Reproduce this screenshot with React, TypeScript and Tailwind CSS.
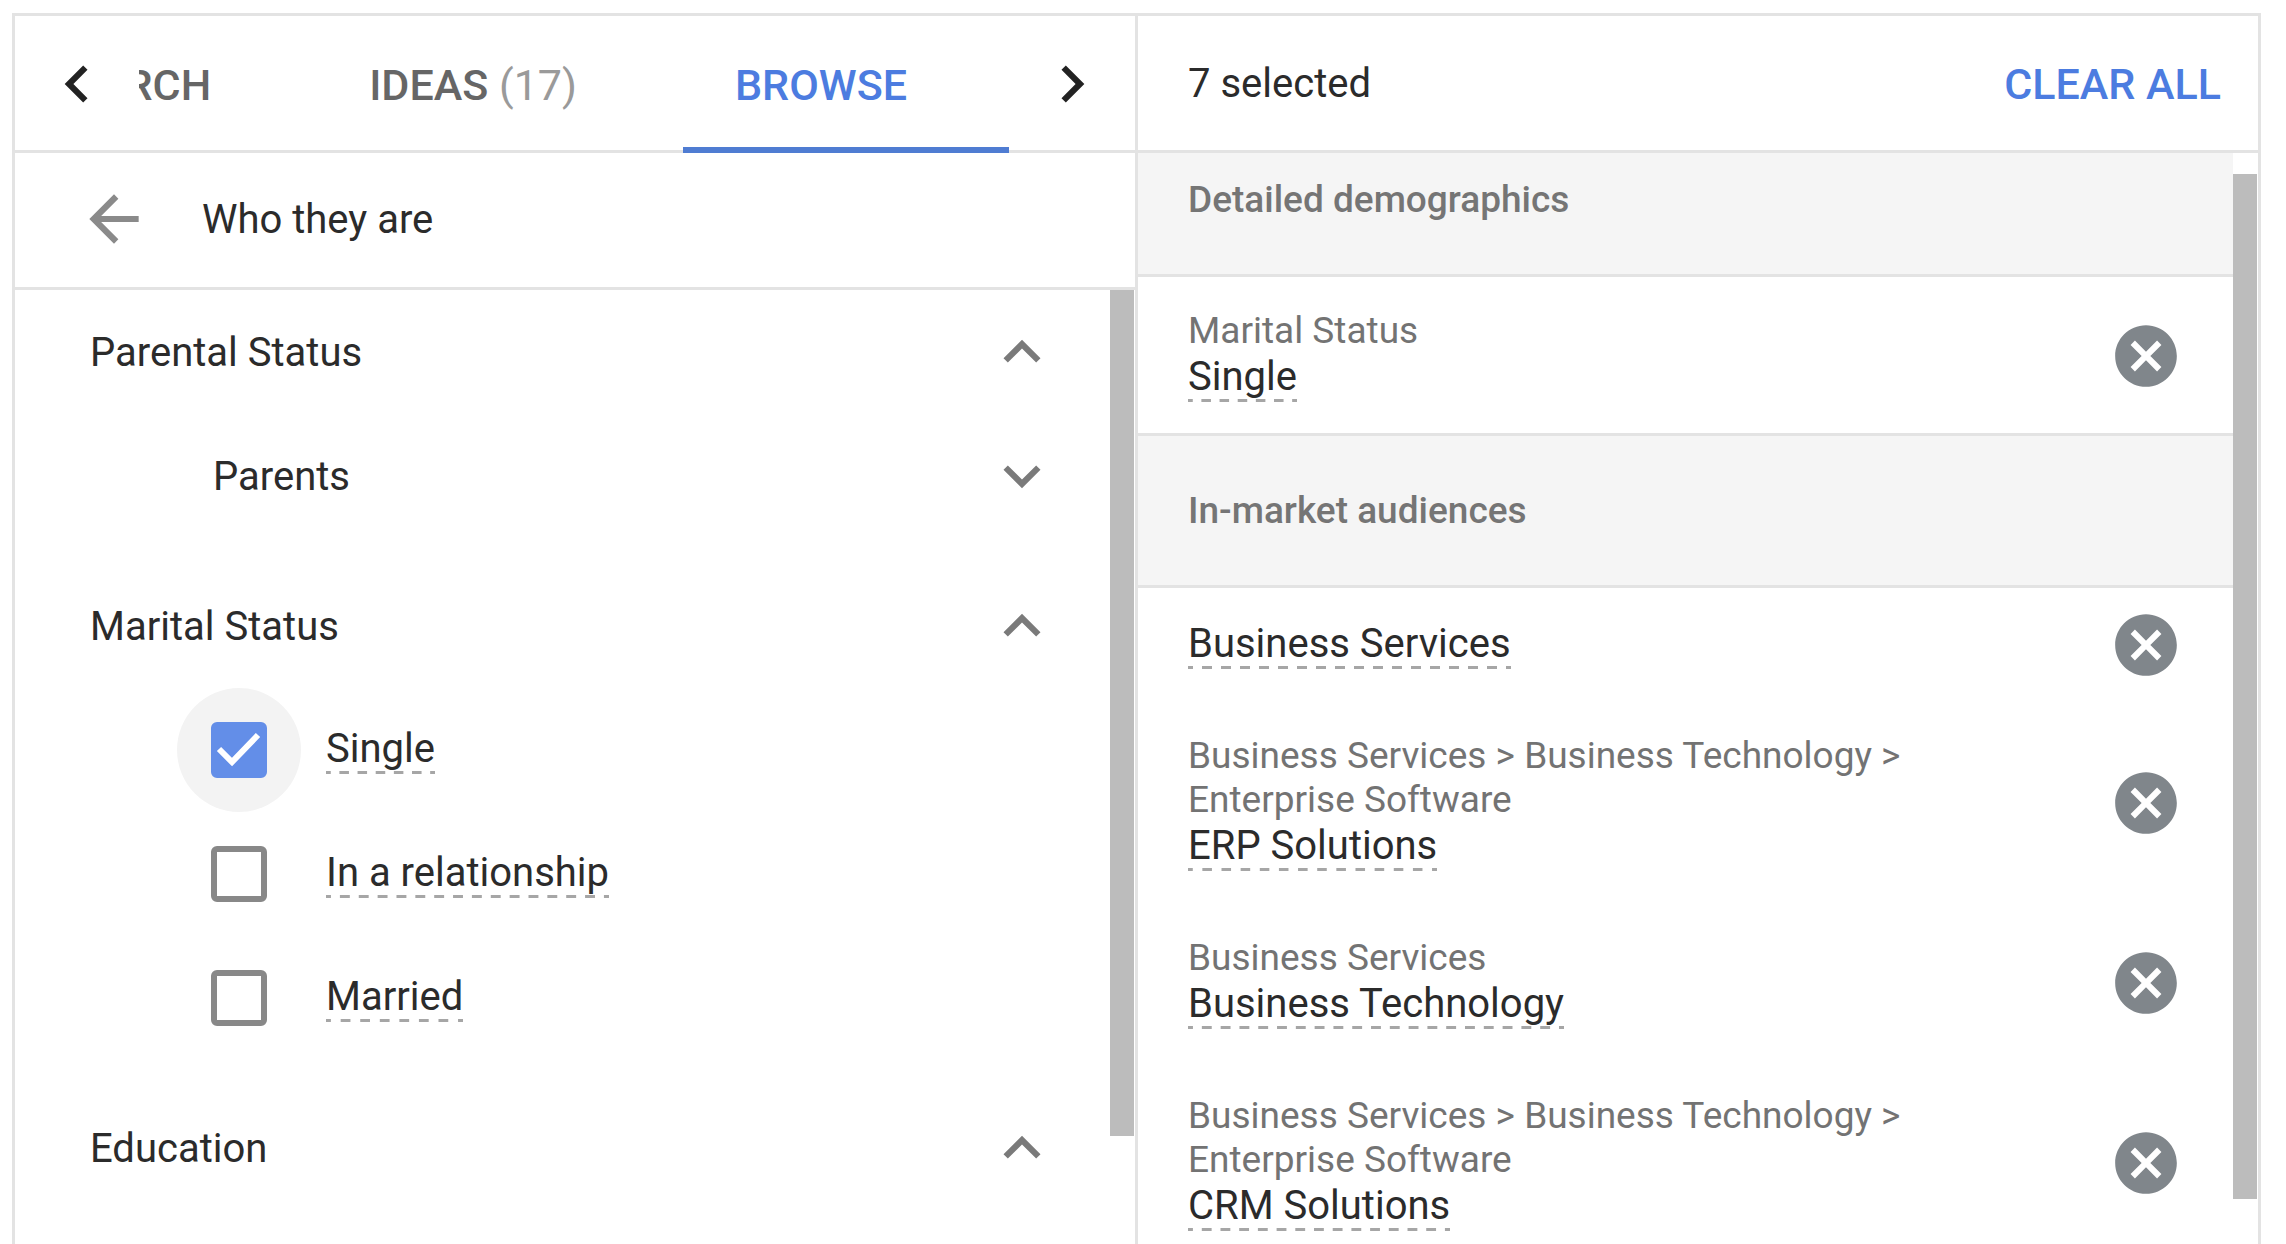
import { useState } from "react";

const PATHS = {
  up: "M12 8l-6 6 1.41 1.41L12 10.83l4.59 4.58L18 14z",
  down: "M16.59 8.59L12 13.17 7.41 8.59 6 10l6 6 6-6z",
  left: "M15.41 7.41L14 6l-6 6 6 6 1.41-1.41L10.83 12z",
  right: "M10 6L8.59 7.41 13.17 12l-4.58 4.59L10 18l6-6z",
  back: "M20 11H7.83l5.59-5.59L12 4l-8 8 8 8 1.41-1.41L7.83 13H20v-2z",
  cancel:
    "M12 2C6.47 2 2 6.47 2 12s4.47 10 10 10 10-4.47 10-10S17.53 2 12 2zm5 13.59L15.59 17 12 13.41 8.41 17 7 15.59 10.59 12 7 8.41 8.41 7 12 10.59 15.59 7 17 8.41 13.41 12 17 15.59z",
};

function Icon({ name }: { name: keyof typeof PATHS }) {
  return (
    <svg viewBox="0 0 24 24" className="size-[74px] shrink-0" fill="currentColor" aria-hidden="true">
      <path d={PATHS[name]} />
    </svg>
  );
}

const DASHED =
  "pb-[2px] bg-[linear-gradient(90deg,#a6a6a6_0_25%,transparent_25%_75%,#a6a6a6_75%)] bg-[length:19px_3px] [background-position:left_bottom] [background-repeat:round_no-repeat]";

function Group({ title, open = true, nested = false }: { title: string; open?: boolean; nested?: boolean }) {
  return (
    <button
      type="button"
      aria-expanded={open}
      className={`flex h-[124px] w-full items-center justify-between pr-[51px] text-left text-[#7a7a7a] ${nested ? "pl-[198px]" : "pl-[75px]"}`}
    >
      <span className="text-[#2b2b2b]">{title}</span>
      <Icon name={open ? "up" : "down"} />
    </button>
  );
}

function Option({ label, initial = false }: { label: string; initial?: boolean }) {
  const [checked, setChecked] = useState(initial);
  return (
    <label className="flex h-[124px] items-center pl-[162px]">
      <span className={`grid size-[124px] shrink-0 place-items-center rounded-full ${checked ? "bg-[#f3f3f3]" : ""}`}>
        <input
          type="checkbox"
          checked={checked}
          onChange={(e) => setChecked(e.target.checked)}
          className="col-start-1 row-start-1 size-[56px] appearance-none rounded-[6px] border-[6px] border-[#888888] checked:border-[#638ee8] checked:bg-[#638ee8]"
        />
        {checked && (
          <svg viewBox="0 0 56 56" className="pointer-events-none col-start-1 row-start-1 size-[56px]" fill="none" aria-hidden="true">
            <path d="M8 27l13 13 26-27" stroke="#fff" strokeWidth="6" />
          </svg>
        )}
      </span>
      <span className={`mb-[2px] ml-[25px] ${DASHED}`}>{label}</span>
    </label>
  );
}

function SectionHeader({ title }: { title: string }) {
  return (
    <h2 className="flex h-[152px] shrink-0 items-center border-b-[3px] border-[#e3e3e3] bg-[#f5f5f5] pl-[50px] text-[37px] font-medium text-[#757575]">
      {title}
    </h2>
  );
}

function Selected({ path, title, last = false }: { path?: string; title: string; last?: boolean }) {
  return (
    <li
      className={`flex shrink-0 items-center justify-between pt-[32px] pr-[50px] pl-[50px] ${last ? "border-b-[3px] border-[#e3e3e3] pb-[31px]" : "pb-[33px]"}`}
    >
      <div className="flex max-w-[760px] flex-col items-start">
        {path && <span className="text-[37px] leading-[44px] text-[#737373]">{path}</span>}
        <span className={`leading-[47px] ${DASHED}`}>{title}</span>
      </div>
      <button type="button" aria-label={`Remove ${title}`} className="-my-[16px] text-[#80868b]">
        <Icon name="cancel" />
      </button>
    </li>
  );
}

const TAB = "flex h-full shrink-0 items-center border-b-[6px] pt-[8px] pr-[102px] pl-[52px] text-[43px] font-medium whitespace-pre";

export default function App() {
  return (
    <div className="flex h-screen overflow-hidden bg-white pt-[13px] pr-[25px] pl-[12px] font-['Roboto',sans-serif] text-[40px] leading-[47px] text-[#2b2b2b]">
      <main className="flex min-w-0 flex-1 border-x-[3px] border-t-[3px] border-[#e3e3e3]">
        <section className="flex min-w-0 flex-1 flex-col border-r-[3px] border-[#e3e3e3]">
          <nav className="flex h-[137px] shrink-0 items-center border-b-[3px] border-[#e3e3e3] pt-[2px] pl-[25px] text-[#222222]">
            <button type="button" aria-label="Previous tabs">
              <Icon name="left" />
            </button>
            <div className="-mt-[2px] -mb-[3px] ml-[25px] flex min-w-0 flex-1 justify-end gap-[4px] self-stretch overflow-hidden" role="tablist">
              <button type="button" role="tab" aria-selected={false} className={`${TAB} border-transparent text-[#666666]`}>
                SEARCH
              </button>
              <button type="button" role="tab" aria-selected={false} className={`${TAB} border-transparent text-[#666666]`}>
                IDEAS <span className="font-normal text-[#9a9a9a]">(17)</span>
              </button>
              <button type="button" role="tab" aria-selected={true} className={`${TAB} border-[#4f7cd2] text-[#4c7ce0]`}>
                BROWSE
              </button>
            </div>
            <button type="button" aria-label="Next tabs" className="mr-[26px] ml-[26px]">
              <Icon name="right" />
            </button>
          </nav>
          <div className="flex h-[137px] shrink-0 items-center border-b-[3px] border-[#e3e3e3] pb-[2px] pl-[62px]">
            <button type="button" aria-label="Back" className="text-[#8a8a8a]">
              <Icon name="back" />
            </button>
            <h1 className="ml-[51px]">Who they are</h1>
          </div>
          <div className="flex min-h-0 flex-1 overflow-hidden">
            <div className="flex-1">
              <Group title="Parental Status" />
              <Group title="Parents" open={false} nested />
              <div className="mt-[26px]">
                <Group title="Marital Status" />
                <Option label="Single" initial />
                <Option label="In a relationship" />
                <Option label="Married" />
              </div>
              <div className="mt-[26px]">
                <Group title="Education" />
              </div>
            </div>
            <div className="mr-[1px] mb-[108px] w-[24px] bg-[#bcbcbc]" />
          </div>
        </section>
        <section className="flex min-w-0 flex-1 flex-col">
          <header className="flex h-[137px] shrink-0 items-center justify-between border-b-[3px] border-[#e3e3e3] pr-[37px] pl-[50px]">
            <span>7 selected</span>
            <button type="button" className="pt-[2px] text-[43px] font-medium text-[#4c7ce0]">
              CLEAR ALL
            </button>
          </header>
          <div className="flex min-h-0 flex-1 overflow-hidden">
            <div className="-mt-[28px] flex flex-1 flex-col">
              <SectionHeader title="Detailed demographics" />
              <ul>
                <Selected path="Marital Status" title="Single" last />
              </ul>
              <SectionHeader title="In-market audiences" />
              <ul>
                <Selected title="Business Services" />
                <Selected path="Business Services > Business Technology > Enterprise Software" title="ERP Solutions" />
                <Selected path="Business Services" title="Business Technology" />
                <Selected path="Business Services > Business Technology > Enterprise Software" title="CRM Solutions" />
              </ul>
            </div>
            <div className="mt-[21px] mr-[1px] mb-[45px] w-[24px] bg-[#bcbcbc]" />
          </div>
        </section>
      </main>
    </div>
  );
}
